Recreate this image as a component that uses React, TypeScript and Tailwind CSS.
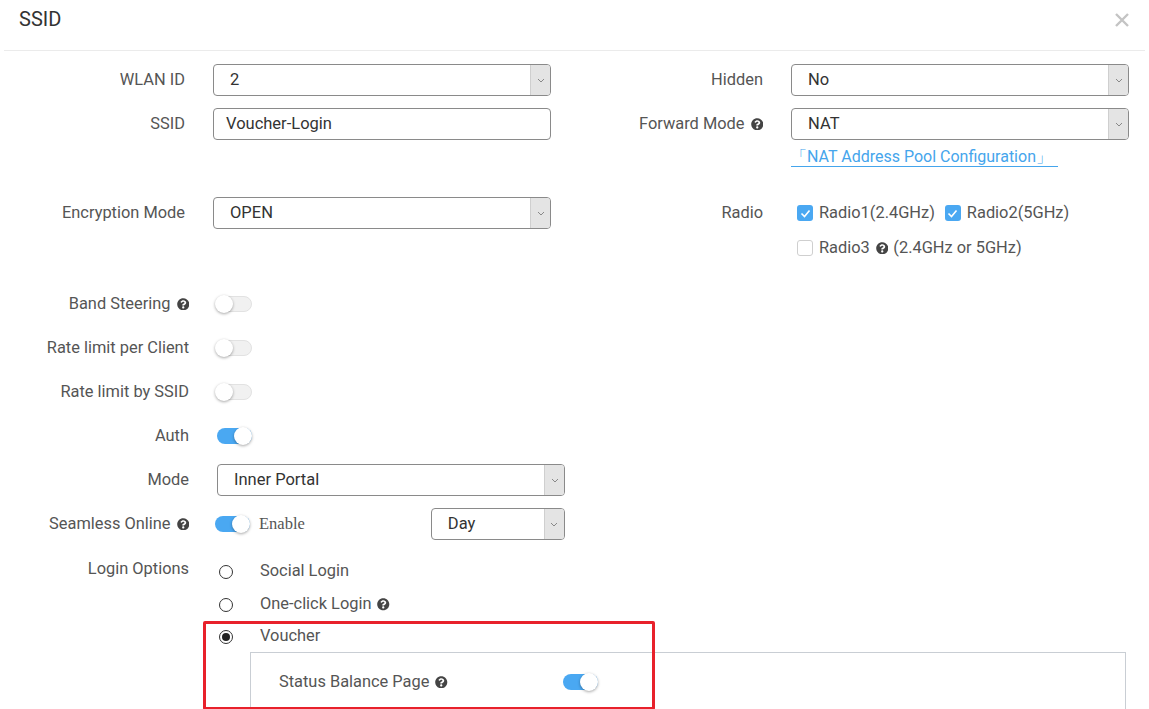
import React from 'react';
import { FaQuestionCircle } from 'react-icons/fa';

const Help = () => <FaQuestionCircle className="inline-block ml-[6px] text-[12.5px] text-[#444] align-[-1px] shrink-0" />;

const Select = ({ value, className = '' }: { value: string; className?: string }) => (
  <div className={`flex h-[32px] border border-[#8a8a8a] rounded-[4px] overflow-hidden bg-white ${className}`}>
    <div className="flex-1 flex items-center pl-[16px] text-[16.5px] text-[#333]">{value}</div>
    <div className="w-[20px] flex items-center justify-center bg-[#e4e4e4] border-l border-[#cfcfcf]">
      <svg width="8" height="5" viewBox="0 0 8 5">
        <path d="M1 1l3 3 3-3" fill="none" stroke="#888" strokeWidth="1" />
      </svg>
    </div>
  </div>
);

const Toggle = ({ on }: { on?: boolean }) => (
  <div className="relative w-[37px] h-[18px]">
    <div
      className={`absolute left-[2px] right-0 top-[1px] h-[16px] rounded-full ${
        on ? 'bg-[#4aa8f2]' : 'bg-[#f1f1f1] border border-[#e2e2e2]'
      }`}
    />
    <div
      className={`absolute top-0 h-[18px] w-[18px] rounded-full bg-white shadow-[0_1px_3px_rgba(0,0,0,0.35)] ${
        on ? 'right-0' : 'left-0'
      }`}
    />
  </div>
);

const Check = ({ on }: { on?: boolean }) =>
  on ? (
    <div className="w-[16px] h-[16px] rounded-[3px] bg-[#4aa8f2] flex items-center justify-center">
      <svg width="11" height="9" viewBox="0 0 11 9">
        <path d="M1.5 4.5l3 3 5-6" fill="none" stroke="#fff" strokeWidth="1.6" />
      </svg>
    </div>
  ) : (
    <div className="w-[16px] h-[16px] rounded-[3px] border border-[#cfcfcf] bg-white" />
  );

const Radio = ({ on }: { on?: boolean }) => (
  <div className="w-[14px] h-[14px] rounded-full border border-[#333] flex items-center justify-center">
    {on && <div className="w-[8px] h-[8px] rounded-full bg-[#222]" />}
  </div>
);

const TopLabel = ({ children, w }: { children: React.ReactNode; w: string }) => (
  <div className={`${w} h-[32px] flex items-center justify-end text-[16.4px] text-[#555] whitespace-nowrap`}>{children}</div>
);

const Label = ({ children }: { children: React.ReactNode }) => (
  <div className="w-[189px] h-[32px] flex items-center justify-end text-[16.4px] text-[#555] whitespace-nowrap">
    {children}
  </div>
);

export default function App() {
  return (
    <div className="relative w-[1149px] h-[709px] overflow-hidden bg-white font-['Roboto',sans-serif]">
      {/* dialog header */}
      <div className="mx-[4px] h-[51px] border-b border-[#ebebeb] flex justify-between pl-[15px] pr-[15px] pt-[6px]">
        <h1 className="text-[20px] text-[#333] leading-[26px]">SSID</h1>
        <svg width="16" height="16" viewBox="0 0 16 16" className="mt-[6px]">
          <path d="M2 2l12 12M14 2L2 14" stroke="#c4c4c4" strokeWidth="2.4" />
        </svg>
      </div>

      {/* basic settings */}
      <div className="mt-[13px]">
        <div className="flex">
          <TopLabel w="w-[185px]">WLAN ID</TopLabel>
          <Select value="2" className="ml-[28px] w-[338px]" />
          <TopLabel w="w-[212px]">Hidden</TopLabel>
          <Select value="No" className="ml-[28px] w-[338px]" />
        </div>

        <div className="flex items-start mt-[12px]">
          <TopLabel w="w-[185px]">SSID</TopLabel>
          <div className="ml-[28px] w-[338px] h-[32px] border border-[#8a8a8a] rounded-[4px] flex items-center pl-[12px] text-[16.5px] text-[#333]">
            Voucher-Login
          </div>
          <TopLabel w="w-[212px]">
            Forward Mode
            <Help />
          </TopLabel>
          <div className="ml-[28px] w-[338px]">
            <Select value="NAT" />
            <a className="block mt-[8px] w-fit text-[16px] leading-[18px] text-[#45a5ec] border-b border-[#45a5ec] pr-[6px]">
              「NAT Address Pool Configuration」
            </a>
          </div>
        </div>

        <div className="flex items-start mt-[30px]">
          <TopLabel w="w-[185px]">Encryption Mode</TopLabel>
          <Select value="OPEN" className="ml-[28px] w-[338px]" />
          <TopLabel w="w-[212px]">Radio</TopLabel>
          <div className="ml-[34px] text-[16.4px] text-[#555]">
            <div className="h-[32px] flex items-center">
              <Check on />
              <span className="ml-[6px]">Radio1(2.4GHz)</span>
              <span className="ml-[10px]">
                <Check on />
              </span>
              <span className="ml-[6px]">Radio2(5GHz)</span>
            </div>
            <div className="h-[32px] flex items-center mt-[3px]">
              <Check />
              <span className="ml-[6px]">Radio3</span>
              <Help />
              <span className="ml-[5px]">(2.4GHz or 5GHz)</span>
            </div>
          </div>
        </div>
      </div>

      {/* feature switches */}
      <div className="mt-[24px] flex flex-col gap-[12px]">
        <div className="flex items-center">
          <Label>
            Band Steering
            <Help />
          </Label>
          <div className="ml-[26px]">
            <Toggle />
          </div>
        </div>
        <div className="flex items-center">
          <Label>Rate limit per Client</Label>
          <div className="ml-[26px]">
            <Toggle />
          </div>
        </div>
        <div className="flex items-center">
          <Label>Rate limit by SSID</Label>
          <div className="ml-[26px]">
            <Toggle />
          </div>
        </div>
        <div className="flex items-center">
          <Label>Auth</Label>
          <div className="ml-[26px]">
            <Toggle on />
          </div>
        </div>
        <div className="flex items-center">
          <Label>Mode</Label>
          <Select value="Inner Portal" className="ml-[28px] w-[348px]" />
        </div>
        <div className="flex items-center">
          <Label>
            Seamless Online
            <Help />
          </Label>
          <div className="ml-[24px]">
            <Toggle on />
          </div>
          <span className="ml-[9px] font-['Liberation_Serif',serif] text-[16.5px] text-[#555]">Enable</span>
          <Select value="Day" className="ml-[126px] w-[134px]" />
        </div>
      </div>

      {/* login options */}
      <div className="flex items-start mt-[15px]">
        <div className="w-[189px] h-[28px] flex items-center justify-end text-[16.4px] text-[#555]">Login Options</div>
        <div className="ml-[28px] text-[16.4px] text-[#555]">
          <div className="h-[33px] flex items-center">
            <div className="ml-[2px]">
              <Radio />
            </div>
            <span className="ml-[27px]">Social Login</span>
          </div>
          <div className="h-[33px] flex items-center">
            <div className="ml-[2px]">
              <Radio />
            </div>
            <span className="ml-[27px]">One-click Login</span>
            <Help />
          </div>
          <div className="h-[31px] flex items-center">
            <div className="ml-[2px]">
              <Radio on />
            </div>
            <span className="ml-[27px]">Voucher</span>
          </div>
          <div className="ml-[33px] w-[876px] h-[80px] border border-[#c9ced4] pt-[13px] pl-[28px]">
            <div className="h-[32px] flex items-center">
              <div className="w-[282px] flex items-center">
                Status Balance Page
                <Help />
              </div>
              <Toggle on />
            </div>
          </div>
        </div>
      </div>

      {/* highlight frame */}
      <div className="absolute left-[203px] top-[621px] w-[452px] h-[89px] border-[3px] border-[#e8212b] rounded-[2px] pointer-events-none" />
    </div>
  );
}
